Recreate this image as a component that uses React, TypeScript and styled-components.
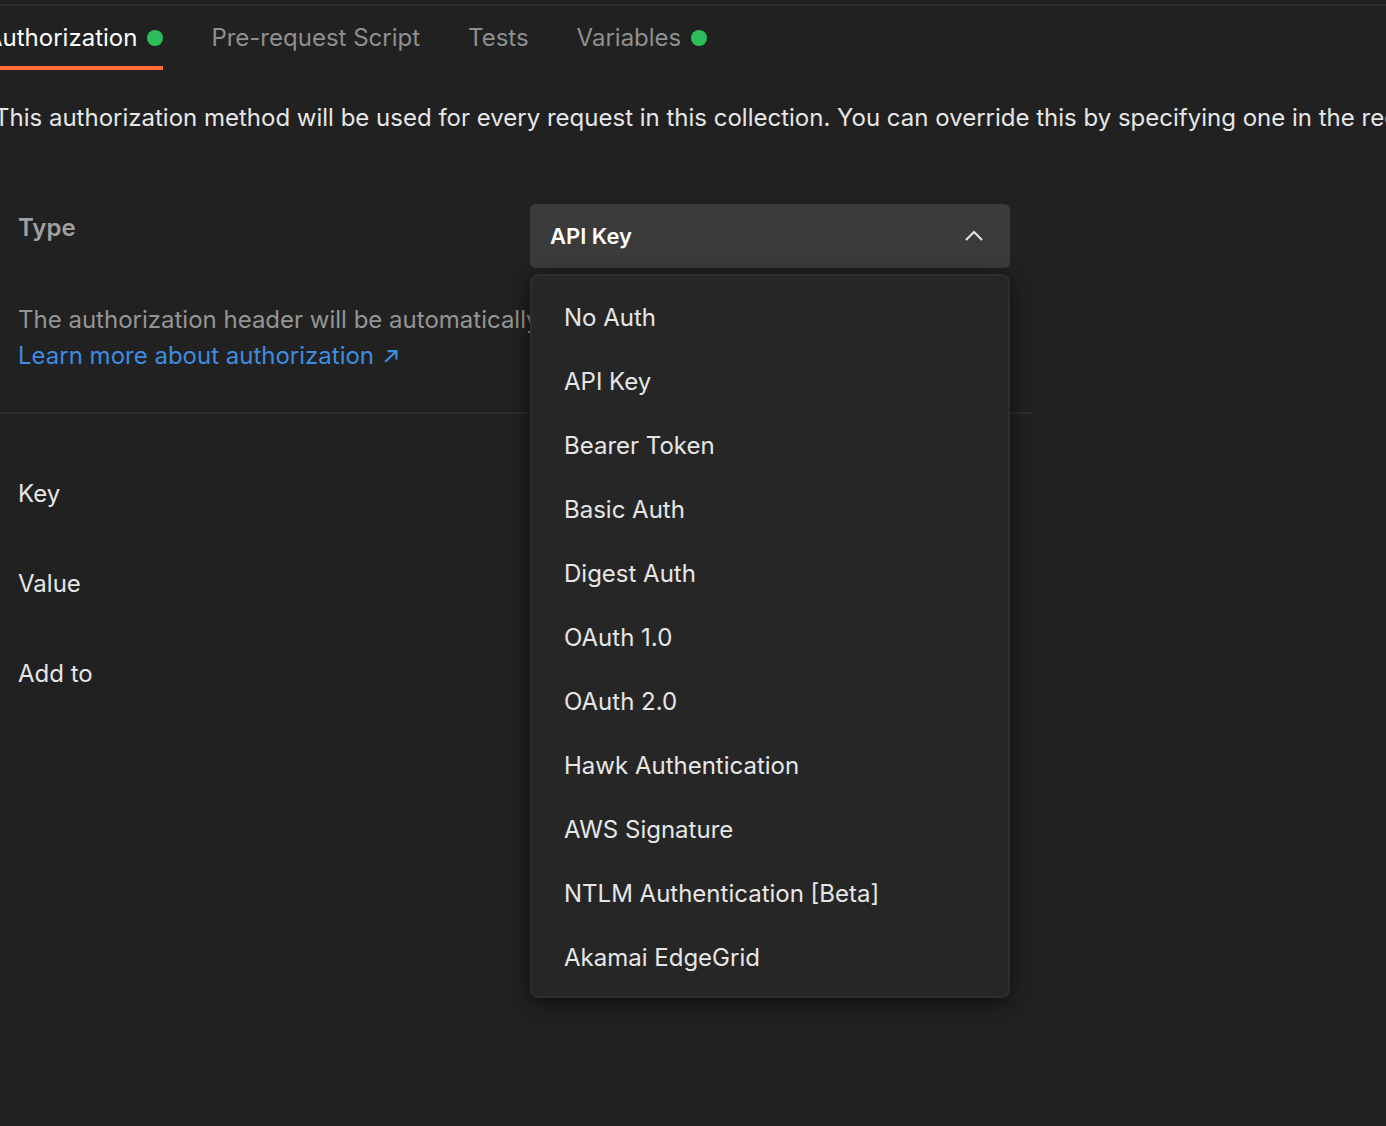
import React, { useState } from "react";
import styled, { createGlobalStyle } from "styled-components";

const GlobalStyle = createGlobalStyle`
  * {
    box-sizing: border-box;
  }

  body {
    margin: 0;
    background: #212121;
    color: #e6e6e6;
    font-family: Inter, "Liberation Sans", sans-serif;
    font-size: 24px;
    line-height: 36px;
  }

  button,
  select {
    font: inherit;
    color: inherit;
  }
`;

const Page = styled.main`
  min-height: 100vh;
  padding-top: 4px;
  overflow: hidden;
`;

const TabBar = styled.nav`
  display: flex;
  gap: 48px;
  margin-left: -14px;
  border-top: 2px solid #2d2d2d;
`;

const Tab = styled.button<{ $active?: boolean }>`
  display: flex;
  align-items: center;
  gap: 10px;
  height: 64px;
  padding: 4px 0 0;
  border: 0;
  border-bottom: 4px solid ${(p) => (p.$active ? "#ff6c37" : "transparent")};
  background: none;
  color: ${(p) => (p.$active ? "#ffffff" : "#8f8f8f")};
  cursor: pointer;
`;

const Dot = styled.span`
  width: 16px;
  height: 16px;
  border-radius: 50%;
  background: #2dbe5c;
`;

const Intro = styled.p`
  margin: 30px 0 0 -6px;
  white-space: nowrap;
`;

const TypeSection = styled.section`
  display: grid;
  grid-template-columns: 512px 480px;
  max-width: 1034px;
  margin-top: 68px;
  padding: 0 0 38px 18px;
  border-bottom: 2px solid #2d2d2d;
`;

const TypeInfo = styled.div`
  padding-top: 6px;
  white-space: nowrap;
`;

const TypeLabel = styled.label`
  display: block;
  color: #a0a0a0;
  font-weight: 600;
`;

const Hint = styled.p`
  margin: 56px 0 0;
  color: #959595;
`;

const DocsLink = styled.a`
  display: inline-flex;
  align-items: center;
  gap: 10px;
  color: #3d8ce0;
  text-decoration: none;
`;

const Picker = styled.div`
  position: relative;
  height: 64px;
`;

const TypeSelect = styled.select`
  width: 100%;
  height: 64px;
  padding: 0 20px;
  border: 0;
  border-radius: 6px;
  outline: 0;
  appearance: none;
  background: #3b3b3b;
  color: #ffffff;
  font-size: 22px;
  font-weight: 600;
  cursor: pointer;
`;

const Chevron = styled.svg`
  position: absolute;
  top: 22px;
  right: 26px;
  pointer-events: none;
`;

const Menu = styled.div`
  position: absolute;
  top: 70px;
  left: 0;
  right: 0;
  display: flex;
  flex-direction: column;
  padding: 10px 0 6px;
  border: 2px solid #2d2d2d;
  border-radius: 8px;
  background: #262626;
  box-shadow: 0 4px 20px rgba(0, 0, 0, 0.6);
`;

const Option = styled.button`
  height: 64px;
  padding: 0 32px;
  border: 0;
  background: none;
  text-align: left;
  cursor: pointer;

  &:hover {
    background: #303030;
  }
`;

const Fields = styled.dl`
  display: grid;
  gap: 54px;
  margin: 0;
  padding: 62px 18px;
`;

const FieldName = styled.dt`
  margin: 0;
`;

const authTypes = [
  "No Auth",
  "API Key",
  "Bearer Token",
  "Basic Auth",
  "Digest Auth",
  "OAuth 1.0",
  "OAuth 2.0",
  "Hawk Authentication",
  "AWS Signature",
  "NTLM Authentication [Beta]",
  "Akamai EdgeGrid",
];

const tabs = [
  { name: "Authorization", dot: true },
  { name: "Pre-request Script", dot: false },
  { name: "Tests", dot: false },
  { name: "Variables", dot: true },
];

export default function App() {
  const [tab, setTab] = useState("Authorization");
  const [type, setType] = useState("API Key");
  const [open, setOpen] = useState(true);

  const choose = (name: string) => {
    setType(name);
    setOpen(false);
  };

  return (
    <Page>
      <GlobalStyle />
      <TabBar>
        {tabs.map((t) => (
          <Tab key={t.name} $active={t.name === tab} onClick={() => setTab(t.name)}>
            {t.name}
            {t.dot && <Dot />}
          </Tab>
        ))}
      </TabBar>
      <Intro>
        This authorization method will be used for every request in this collection. You can
        override this by specifying one in the request.
      </Intro>
      <TypeSection>
        <TypeInfo>
          <TypeLabel htmlFor="auth-type">Type</TypeLabel>
          <Hint>The authorization header will be automatically</Hint>
          <DocsLink href="#authorization">
            Learn more about authorization
            <svg width="16" height="16" viewBox="0 0 16 16" fill="none" aria-hidden="true">
              <path d="M3.5 3.2H12.4V11.5M12 3.5L1.2 13.7" stroke="currentColor" strokeWidth="2.2" />
            </svg>
          </DocsLink>
        </TypeInfo>
        <Picker>
          <TypeSelect
            id="auth-type"
            value={type}
            onChange={(e) => choose(e.target.value)}
            onMouseDown={(e) => {
              e.preventDefault();
              setOpen(!open);
            }}
          >
            {authTypes.map((name) => (
              <option key={name}>{name}</option>
            ))}
          </TypeSelect>
          <Chevron width="20" height="20" viewBox="0 0 20 20" fill="none" aria-hidden="true">
            <path d="M2 14L10 6L18 14" stroke="#e6e6e6" strokeWidth="2" />
          </Chevron>
          {open && (
            <Menu role="listbox" aria-label="Type">
              {authTypes.map((name) => (
                <Option
                  key={name}
                  role="option"
                  aria-selected={name === type}
                  onClick={() => choose(name)}
                >
                  {name}
                </Option>
              ))}
            </Menu>
          )}
        </Picker>
      </TypeSection>
      <Fields>
        <FieldName>Key</FieldName>
        <FieldName>Value</FieldName>
        <FieldName>Add to</FieldName>
      </Fields>
    </Page>
  );
}
